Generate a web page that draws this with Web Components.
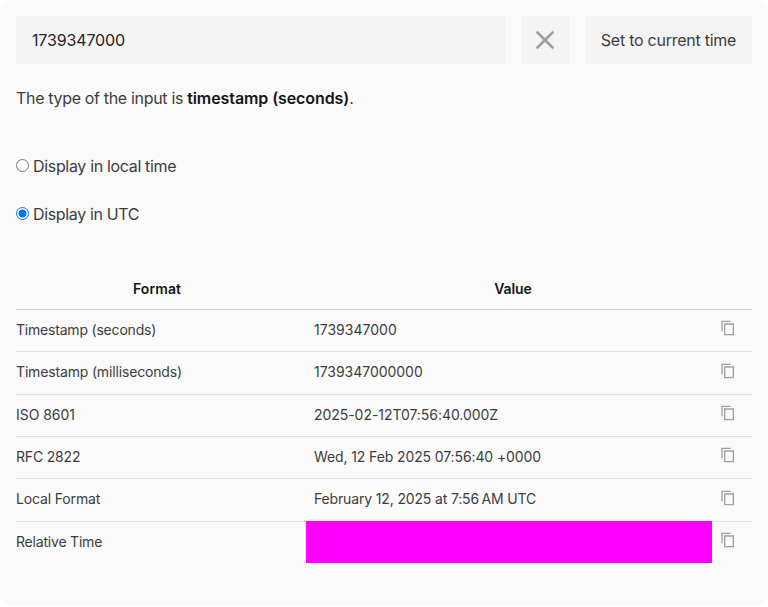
<!DOCTYPE html>
<html lang="en">
<head>
<meta charset="utf-8">
<title>Timestamp converter</title>
<style>
html { background: #fff; }
body { margin: 0; font-family: Inter, "Liberation Sans", sans-serif; font-size: 16px; color: #3d3d3d; }
</style>
</head>
<body>
<time-converter></time-converter>
<script>
const define = (name, html) => {
  const template = document.createElement('template');
  template.innerHTML = html;
  customElements.define(name, class extends HTMLElement {
    constructor() {
      super();
      this.attachShadow({ mode: 'open' }).append(template.content.cloneNode(true));
    }
  });
};

define('close-icon', `
<style>:host{display:block;width:32px;height:32px;color:#a0a0a0}svg{display:block}</style>
<svg width="32" height="32" viewBox="0 0 24 24" fill="currentColor"><path d="M19 6.41L17.59 5 12 10.59 6.41 5 5 6.41 10.59 12 5 17.59 6.41 19 12 13.41 17.59 19 19 17.59 13.41 12z"/></svg>`);

define('copy-icon', `
<style>:host{display:block;width:16px;height:16px;color:#a0a0a0}svg{display:block}</style>
<svg width="16" height="16" viewBox="0 0 24 24" fill="currentColor"><path d="M16 1H2v16h2V3h12V1zm5 4H6v18h15V5zm-2 16H8V7h11v14z"/></svg>`);

define('tool-button', `
<style>
:host{display:block}
button{all:unset;box-sizing:border-box;width:100%;height:48px;display:flex;align-items:center;justify-content:center;background:#f4f4f4;white-space:nowrap;line-height:24px}
</style>
<button><slot></slot></button>`);

define('text-field', `
<style>
:host{display:block;height:48px;background:#f4f4f4;color:#242424;padding:0 16px;box-sizing:border-box;line-height:48px;letter-spacing:-.15px}
</style>
<slot></slot>`);

define('radio-option', `
<style>
:host{display:flex;align-items:center;height:24px;line-height:24px;gap:4px;white-space:nowrap}
i{box-sizing:border-box;width:13px;height:13px;border:1px solid #767676;border-radius:50%;background:#fff;margin-top:-2px}
:host([checked]) i{border-color:#0075ff;background:radial-gradient(circle,#0075ff 3.7px,#fff 4.3px)}
</style>
<i role="radio"></i><span><slot></slot></span>`);

define('format-row', `
<style>
:host{display:grid;grid-template-columns:298px 398px 40px;height:42.33px;box-sizing:border-box;border-bottom:1px solid #e3e3e3;align-items:center;font-size:14px;line-height:20px;white-space:nowrap}
:host([last]){border-bottom-color:transparent}
.label{margin-top:-1.54px}
.value{align-self:stretch;display:flex;align-items:center;padding-bottom:1.54px}
copy-icon{margin:-4.74px 0 0 8px}
:host([redacted]) .value{box-sizing:border-box;margin:-1px 0 0 -8px;width:406px;height:42px;background:#f0f}
</style>
<span class="label"><slot name="label"></slot></span><span class="value"><slot></slot></span><copy-icon></copy-icon>`);

define('format-table', `
<style>
:host{display:block}
header{display:grid;grid-template-columns:282px 430px 24px;height:42px;box-sizing:border-box;border-bottom:1px solid #cecece;text-align:center;font-size:14px;font-weight:600;color:#161616;line-height:42px}
.value{letter-spacing:-.12px}.format{letter-spacing:.1px}
</style>
<header><span class="format">Format</span><span class="value">Value</span><span></span></header>
<slot></slot>`);

define('time-converter', `
<style>
:host{display:block;height:606px;box-sizing:border-box;padding:16px;background:#fafafa;border-radius:12px}
.bar{display:grid;grid-template-columns:489px 48px 167px;gap:16px}
p{margin:22px 0 0;line-height:24px;letter-spacing:-.33px;white-space:nowrap}
b{font-weight:600;color:#161616;letter-spacing:-.09px}
.options{margin-top:44px;display:grid;gap:24px}
format-table{margin-top:42px}
</style>
<div class="bar">
<text-field>1739347000</text-field>
<tool-button aria-label="Clear"><close-icon></close-icon></tool-button>
<tool-button style="letter-spacing:-.25px">Set to current time</tool-button>
</div>
<p>The type of the input is <b>timestamp (seconds)</b>.</p>
<div class="options">
<radio-option style="letter-spacing:-.33px">Display in local time</radio-option>
<radio-option style="letter-spacing:-.36px" checked>Display in UTC</radio-option>
</div>
<format-table>
<format-row><span slot="label" style="letter-spacing:-.2px">Timestamp (seconds)</span><span style="letter-spacing:.02px">1739347000</span></format-row>
<format-row><span slot="label" style="letter-spacing:-.16px">Timestamp (milliseconds)</span><span style="letter-spacing:-.03px">1739347000000</span></format-row>
<format-row><span slot="label" style="letter-spacing:-.05px">ISO 8601</span><span style="letter-spacing:-.05px">2025-02-12T07:56:40.000Z</span></format-row>
<format-row><span slot="label" style="letter-spacing:-.18px">RFC 2822</span><span style="letter-spacing:-.11px">Wed, 12 Feb 2025 07:56:40 +0000</span></format-row>
<format-row><span slot="label" style="letter-spacing:-.15px">Local Format</span><span style="letter-spacing:-.15px">February 12, 2025 at 7:56&#8201;AM UTC</span></format-row>
<format-row redacted last><span slot="label" style="letter-spacing:-.2px">Relative Time</span></format-row>
</format-table>`);
</script>
</body>
</html>
